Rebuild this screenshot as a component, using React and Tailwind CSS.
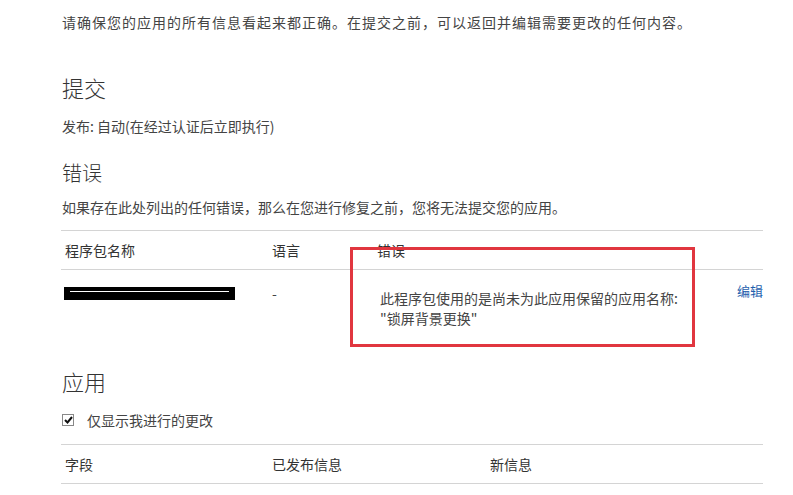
export default function App() {
  const font = { fontFamily: '"Noto Sans CJK SC", "Microsoft YaHei", sans-serif' };
  return (
    <div className="relative w-[793px] h-[495px] overflow-hidden bg-white text-[#444]" style={font}>
      <div className="pl-[62px] w-[763px]">
        <div className="pt-[12px] text-[14px] leading-[20px] tracking-[1px] whitespace-nowrap">
          请确保您的应用的所有信息看起来都正确。在提交之前，可以返回并编辑需要更改的任何内容。
        </div>
        <div className="mt-[40px] text-[22px] leading-[30px] font-light text-[#333]">提交</div>
        <div className="mt-[14px] text-[14px] leading-[20px]">发布: 自动(在经过认证后立即执行)</div>
        <div className="mt-[22px] text-[20px] leading-[30px] font-light text-[#333]">错误</div>
        <div className="mt-[9px] text-[14px] leading-[20px] whitespace-nowrap">
          如果存在此处列出的任何错误，那么在您进行修复之前，您将无法提交您的应用。
        </div>
        <div className="mt-[13px] ml-[-1px] border-t border-[#d4d4d4]">
          <div className="flex h-[39px] items-center border-b border-[#d4d4d4] text-[14px] text-[#333]">
            <div className="w-[207px] pl-[4px]">程序包名称</div>
            <div className="w-[105px] pl-[4px]">语言</div>
            <div className="flex-1 pl-[4px]">错误</div>
          </div>
          <div className="flex h-[80px] text-[14px]">
            <div className="w-[207px] pl-[3px] pt-[17px]">
              <div className="h-[13px] w-[171px] bg-black flex items-start pt-[4px] px-[6px]">
                <div className="h-px w-full bg-white" />
              </div>
            </div>
            <div className="w-[105px] pl-[4px] pt-[13px] leading-[20px]">-</div>
            <div className="w-[364px] pl-[7px] pt-[18px] leading-[20px]">
              <div>此程序包使用的是尚未为此应用保留的应用名称:</div>
              <div>"锁屏背景更换"</div>
            </div>
            <div className="pt-[11px] leading-[20px] text-[13px] text-[#1f5fae]">编辑</div>
          </div>
        </div>
        <div className="mt-[16px] text-[22px] leading-[30px] font-light text-[#333]">应用</div>
        <div className="mt-[14px] flex items-center h-[20px] text-[14px]">
          <div className="w-[12px] h-[12px] border border-[#888] flex items-center justify-center">
            <svg width="9" height="8" viewBox="0 0 9 8">
              <path d="M1 4 L3.5 6.5 L8 1" stroke="#111" strokeWidth="2" fill="none" />
            </svg>
          </div>
          <span className="ml-[13px]">仅显示我进行的更改</span>
        </div>
        <div className="mt-[14px] ml-[-1px] border-t border-[#d4d4d4]">
          <div className="flex h-[39px] items-center border-b border-[#d4d4d4] text-[14px] text-[#333]">
            <div className="w-[207px] pl-[4px]">字段</div>
            <div className="w-[218px] pl-[4px]">已发布信息</div>
            <div className="flex-1 pl-[4px]">新信息</div>
          </div>
        </div>
      </div>
      <div className="absolute left-[350px] top-[247px] w-[345px] h-[100px] border-[3px] border-[#e1363f]" />
    </div>
  );
}
